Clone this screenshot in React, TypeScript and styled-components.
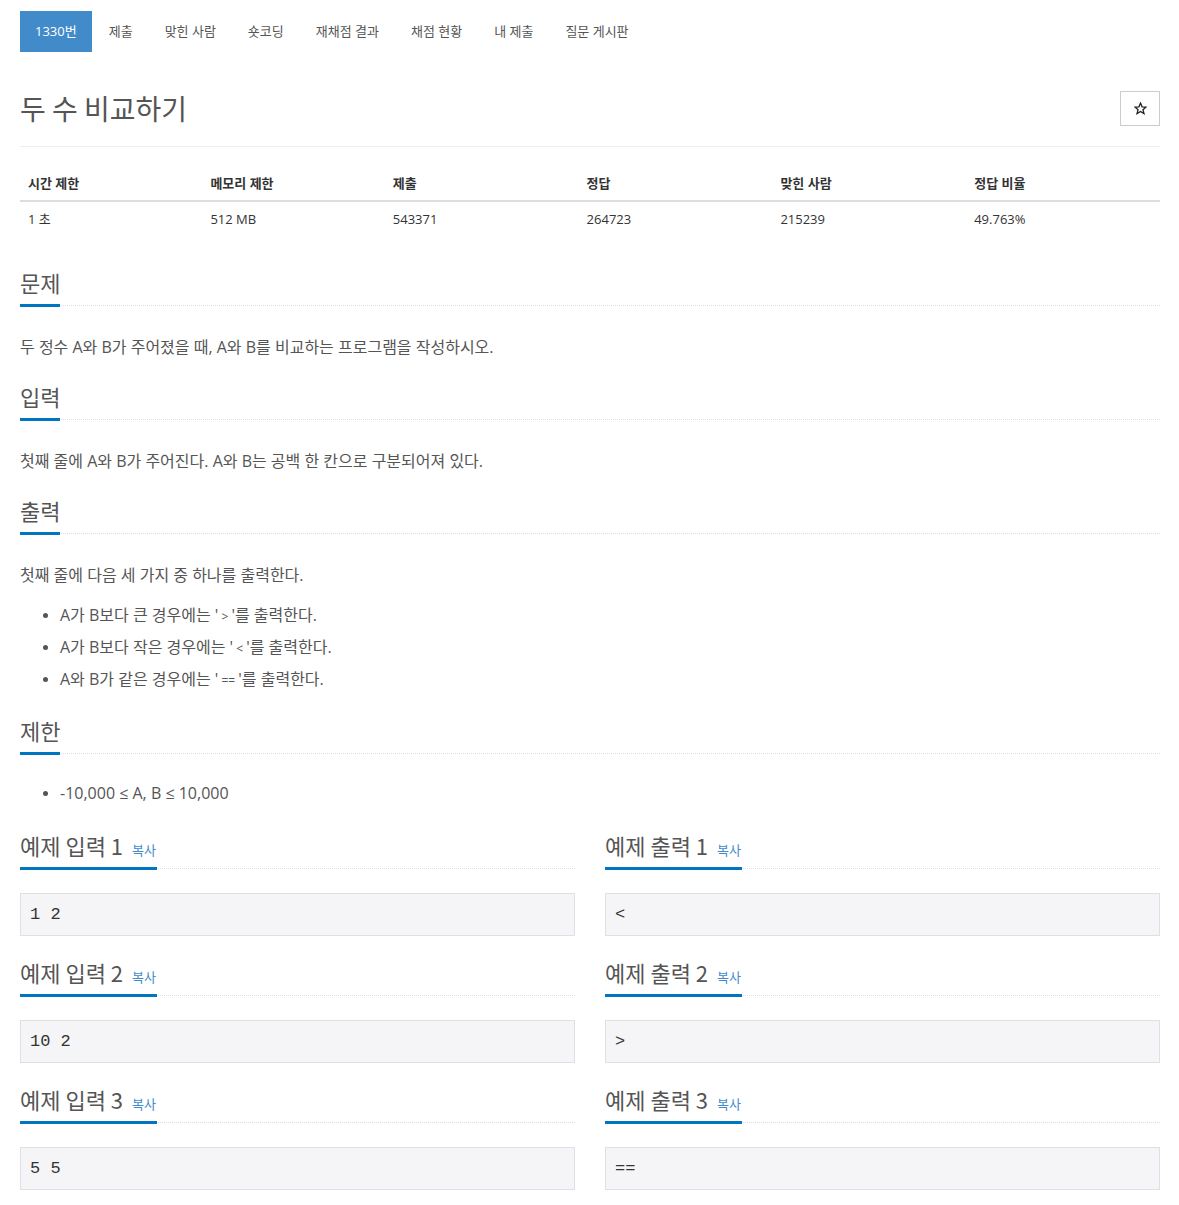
import React from 'react';
import styled, {createGlobalStyle} from 'styled-components';

const GlobalStyle = createGlobalStyle`
    body {
        margin: 0;
        background: #fff;
        font-family: 'Open Sans', 'Noto Sans CJK KR', sans-serif;
        font-size: 14px;
        color: #555;
    }
`

const Page = styled.div`
    width: 1140px;
    margin-left: 20px;
    padding-bottom: 40px;
`
const Nav = styled.ul`
    display: flex;
    list-style: none;
    margin: 11px 0 0;
    padding: 0;
`
const NavItem = styled.li<{active?: boolean}>`
    height: 41px;
    line-height: 41px;
    padding: 0 15px;
    margin-right: 2px;
    font-size: 13px;
    color: ${p => p.active ? '#fff' : '#555'};
    background: ${p => p.active ? '#428bca' : 'transparent'};
`
const Header = styled.div`
    display: flex;
    align-items: center;
    justify-content: space-between;
    margin-top: 36px;
    padding-bottom: 18px;
    border-bottom: 1px solid #eee;
`
const Title = styled.h1`
    margin: 0;
    font-size: 28px;
    line-height: 40px;
    font-weight: 400;
    color: #555;
    font-family: 'Noto Sans CJK KR', 'Open Sans', sans-serif;
`
const StarButton = styled.button`
    width: 40px;
    height: 35px;
    border: 1px solid #ccc;
    background: #fff;
    display: flex;
    align-items: center;
    justify-content: center;
    padding: 0;
    margin-top: 1px;
`
const Table = styled.table`
    width: 100%;
    border-collapse: collapse;
    margin-top: 18px;
    font-size: 13px;
    color: #333;
`
const Th = styled.th<{w: string}>`
    width: ${p => p.w};
    text-align: left;
    font-weight: 700;
    padding: 8px 8px 7px;
    line-height: 20px;
    border-bottom: 2px solid #ddd;
`
const Td = styled.td`
    padding: 7px 8px;
    line-height: 20px;
`
const Section = styled.section<{gap?: number}>`
    margin-top: ${p => p.gap ?? 23}px;
`
const Heading = styled.div`
    display: flex;
    align-items: flex-end;
    border-bottom: 1px dotted #ddd;
`
const HeadingText = styled.h2`
    margin: 0 0 -2px;
    height: 30px;
    font-size: 22px;
    line-height: 30px;
    font-weight: 400;
    color: #555;
    padding-bottom: 7px;
    border-bottom: 3px solid #0076c0;
    font-family: 'Noto Sans CJK KR', 'Open Sans', sans-serif;
    white-space: nowrap;
`
const CopyLink = styled.span`
    font-size: 13px;
    line-height: 1;
    color: #428bca;
    margin-left: 9px;
    padding-right: 1px;
`
const Body = styled.div`
    margin-top: 30px;
    font-size: 16px;
    line-height: 22px;
`
const Paragraph = styled.p`
    margin: 0;
`
const List = styled.ul<{first?: boolean}>`
    margin: ${p => p.first ? '-7px 0 -3px' : '13px 0 -3px'};
    padding-left: 40px;
`
const ListItem = styled.li`
    padding: 5px 0;
    line-height: 22px;
    &::marker {
        font-size: 14px;
    }
`
const Small = styled.span`
    font-size: 12px;
    line-height: 1;
`
const SampleGrid = styled.div`
    display: grid;
    grid-template-columns: 1fr 1fr;
    column-gap: 30px;
    margin-top: 24px;
`
const Sample = styled.div`
    margin-bottom: 21px;
`
const Pre = styled.pre`
    margin: 24px 0 0;
    padding: 9px;
    background: #f5f5f7;
    border: 1px solid #dfe0e5;
    font-family: 'Liberation Mono', 'DejaVu Sans Mono', monospace;
    font-size: 17px;
    line-height: 23px;
    color: #333;
`

const tabs = ['1330번', '제출', '맞힌 사람', '숏코딩', '재채점 결과', '채점 현황', '내 제출', '질문 게시판'];

const samples = [
    ['1 2', '<'],
    ['10 2', '>'],
    ['5 5', '=='],
];

const Star = () => (
    <svg width="13" height="13" viewBox="0 0 24 24" fill="none" stroke="#222" strokeWidth="2.4" strokeLinejoin="miter">
        <polygon points="12,2 14.9,8.9 22.3,9.3 16.6,14.1 18.4,21.4 12,17.4 5.6,21.4 7.4,14.1 1.7,9.3 9.1,8.9"/>
    </svg>
);

const App = () => {
    return (
        <Page>
            <GlobalStyle/>
            <Nav>
                {tabs.map((t, i) => <NavItem key={t} active={i === 0}>{t}</NavItem>)}
            </Nav>
            <Header>
                <Title>두 수 비교하기</Title>
                <StarButton><Star/></StarButton>
            </Header>
            <Table>
                <thead>
                    <tr>
                        <Th w="16%">시간 제한</Th>
                        <Th w="16%">메모리 제한</Th>
                        <Th w="17%">제출</Th>
                        <Th w="17%">정답</Th>
                        <Th w="17%">맞힌 사람</Th>
                        <Th w="17%">정답 비율</Th>
                    </tr>
                </thead>
                <tbody>
                    <tr>
                        <Td>1 초</Td>
                        <Td>512 MB</Td>
                        <Td>543371</Td>
                        <Td>264723</Td>
                        <Td>215239</Td>
                        <Td>49.763%</Td>
                    </tr>
                </tbody>
            </Table>
            <Section gap={31}>
                <Heading><HeadingText>문제</HeadingText></Heading>
                <Body><Paragraph>두 정수 A와 B가 주어졌을 때, A와 B를 비교하는 프로그램을 작성하시오.</Paragraph></Body>
            </Section>
            <Section>
                <Heading><HeadingText>입력</HeadingText></Heading>
                <Body><Paragraph>첫째 줄에 A와 B가 주어진다. A와 B는 공백 한 칸으로 구분되어져 있다.</Paragraph></Body>
            </Section>
            <Section>
                <Heading><HeadingText>출력</HeadingText></Heading>
                <Body>
                    <Paragraph>첫째 줄에 다음 세 가지 중 하나를 출력한다.</Paragraph>
                    <List>
                        <ListItem>A가 B보다 큰 경우에는 '<Small> &gt; </Small>'를 출력한다.</ListItem>
                        <ListItem>A가 B보다 작은 경우에는 '<Small> &lt; </Small>'를 출력한다.</ListItem>
                        <ListItem>A와 B가 같은 경우에는 '<Small> == </Small>'를 출력한다.</ListItem>
                    </List>
                </Body>
            </Section>
            <Section>
                <Heading><HeadingText>제한</HeadingText></Heading>
                <Body>
                    <List first>
                        <ListItem>-10,000 ≤ A, B ≤ 10,000</ListItem>
                    </List>
                </Body>
            </Section>
            <SampleGrid>
                {samples.map(([input, output], i) => (
                    <React.Fragment key={i}>
                        <Sample>
                            <Heading><HeadingText>예제 입력 {i + 1}<CopyLink>복사</CopyLink></HeadingText></Heading>
                            <Pre>{input}</Pre>
                        </Sample>
                        <Sample>
                            <Heading><HeadingText>예제 출력 {i + 1}<CopyLink>복사</CopyLink></HeadingText></Heading>
                            <Pre>{output}</Pre>
                        </Sample>
                    </React.Fragment>
                ))}
            </SampleGrid>
        </Page>
    );
}

export default App;
